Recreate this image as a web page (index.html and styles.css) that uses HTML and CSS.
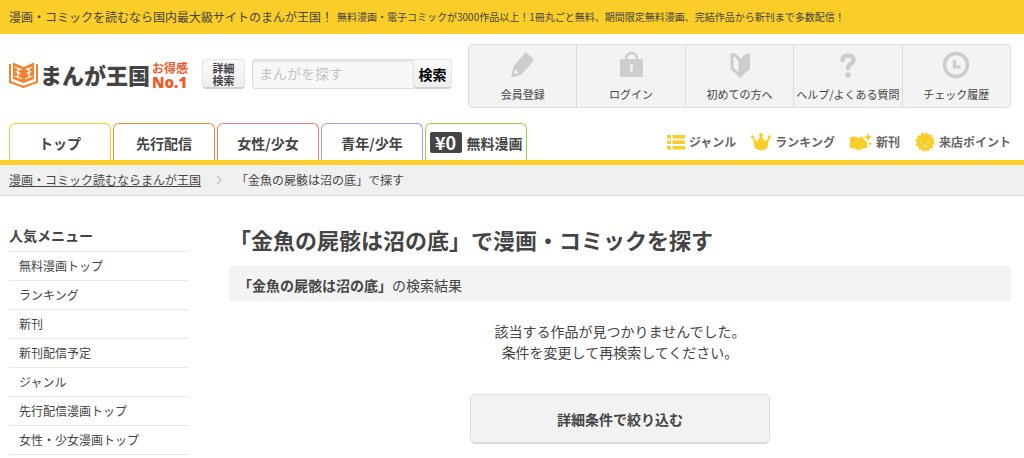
FILE: index.html
```html
<!DOCTYPE html>
<html lang="ja">
<head>
    <meta charset="UTF-8">
    <meta name="viewport" content="width=device-width, initial-scale=1.0">
    <title>「金魚の屍骸は沼の底」で漫画・コミックを探す</title>
    <link rel="stylesheet" href="styles.css">
</head>
<body>
    <div class="topbar">
        <p>漫画・コミックを読むなら国内最大級サイトのまんが王国！</p>
        <small>無料漫画・電子コミックが3000作品以上！1冊丸ごと無料、期間限定無料漫画、完結作品から新刊まで多数配信！</small>
    </div>

    <header class="header">
        <a href="#" class="logo">
            <svg width="29" height="28" viewBox="0 0 29 28" fill="none" stroke="#f5822a" stroke-width="2">
                <path d="M1 3v18l13.500 5L28 21V3"/>
                <path d="M4 1.500l10.500 4.500L25 1.500V18l-10.500 4L4 18z" fill="#f5822a" stroke="none"/>
                <path d="M5.500 6l7 2.500M6.500 10.500l5 2M5.500 15l7.500 3M9 7.500v9M23.500 6l-7 2.500M22.500 10.500l-5 2M23.500 15L16 18M20 7.500v9" stroke="#fff" stroke-width="1.300"/>
            </svg>
            <span class="logo-name">まんが王国</span>
            <span class="logo-copy">お得感<b>No.1</b></span>
        </a>
        <button type="button" class="detail-button">詳細<br>検索</button>
        <form class="search">
            <input type="text" placeholder="まんがを探す" aria-label="まんがを探す">
            <button type="submit">検索</button>
        </form>
        <nav class="user-nav">
            <a href="#">
                <svg width="28" height="28" viewBox="0 0 28 28" fill="#cfcccf">
                    <path d="M15.500 2.500q1.500-1.500 3 0l5.500 5q1.500 1.500 0 3L12 24 2 26.500l2.500-11z"/>
                    <path d="M6 18.500l-1 4.500 4.500-1z" fill="#f3f3f3"/>
                </svg>
                会員登録
            </a>
            <a href="#">
                <svg width="28" height="28" viewBox="0 0 28 28" fill="#cfcccf">
                    <path d="M9 10V7.500a5.500 5.500 0 0 1 11 0V10" fill="none" stroke="#cfcccf" stroke-width="2.500"/>
                    <rect x="3" y="8" width="23" height="18" rx="1.500"/>
                    <path d="M14.500 13a2 2 0 0 1 1 3.700V21h-2v-4.300a2 2 0 0 1 1-3.700z" fill="#f3f3f3"/>
                </svg>
                ログイン
            </a>
            <a href="#">
                <svg width="28" height="28" viewBox="0 0 28 28" fill="#cfcccf">
                    <path d="M6 4.500v13l8 7V9.500Q8 1.500 6 4.500z" fill="none" stroke="#cfcccf" stroke-width="3"/>
                    <path d="M14 9.500Q19 1.500 23 2.500q1 .5 1 2v13.500l-10 8.500z"/>
                </svg>
                初めての方へ
            </a>
            <a href="#">
                <svg width="28" height="28" viewBox="0 0 28 28" fill="#cfcccf">
                    <path d="M8.500 9Q9 4.500 14 4.500t5.500 4.200c0 4-5.500 4-5.500 8.300" fill="none" stroke="#cfcccf" stroke-width="4.500" stroke-linecap="round"/>
                    <circle cx="14" cy="24" r="2.800"/>
                </svg>
                ヘルプ/よくある質問
            </a>
            <a href="#">
                <svg width="28" height="28" viewBox="0 0 28 28" fill="none" stroke="#cfcccf">
                    <circle cx="14" cy="14" r="11.500" stroke-width="3.500"/>
                    <path d="M12.500 9v7h6" stroke-width="3"/>
                </svg>
                チェック履歴
            </a>
        </nav>
    </header>

    <div class="menu">
        <nav class="tabs">
            <a href="#" class="tab tab-top">トップ</a>
            <a href="#" class="tab tab-early">先行配信</a>
            <a href="#" class="tab tab-women">女性/少女</a>
            <a href="#" class="tab tab-men">青年/少年</a>
            <a href="#" class="tab tab-free"><span class="zero">¥0</span>無料漫画</a>
        </nav>
        <nav class="sub-nav">
            <a href="#">
                <svg width="18" height="16" viewBox="0 0 18 16" fill="#facd28">
                    <path d="M0 1h4v3.500H0zM5.500 1H18v3.500H5.500zM0 6.500h4V10H0zM5.500 6.500H18V10H5.500zM0 12h4v3.500H0zM5.500 12H18v3.500H5.500z"/>
                </svg>
                ジャンル
            </a>
            <a href="#">
                <svg width="20" height="18" viewBox="0 0 20 18" fill="#facd28">
                    <path d="M1.500 4l4.500 4.500L10 2l4 6.500L18.500 4 16 15.500q-6 3.500-12 0z"/>
                    <circle cx="1.700" cy="4" r="1.700"/><circle cx="10" cy="2" r="2"/><circle cx="18.300" cy="4" r="1.700"/>
                </svg>
                ランキング
            </a>
            <a href="#">
                <svg width="22" height="18" viewBox="0 0 22 18" fill="#facd28">
                    <path d="M0 4.500q4-2 8.500.5Q11 3.500 12.500 3.500q1 4 4.500 5v6.500q-4-.5-8.500 2.500Q5 14.500 0 15z"/>
                    <path d="M18 0l1.200 2.800L22 4l-2.800 1.200L18 8l-1.200-2.800L14 4l2.800-1.200zM20 8.500l.7 1.500 1.300.7-1.300.7-.7 1.600-.7-1.600-1.300-.7 1.300-.7z"/>
                </svg>
                新刊
            </a>
            <a href="#">
                <svg width="20" height="20" viewBox="0 0 20 20">
                    <circle cx="10" cy="10" r="8.300" fill="#facd28"/>
                    <circle cx="10" cy="10" r="8.300" fill="none" stroke="#facd28" stroke-width="2.500" stroke-dasharray="2.600 1.750"/>
                    <path d="M5.500 10q1.200 2 2.500 0M12 10q1.200 2 2.500 0M7.500 14.500q2 0 2.500-1.500.5 1.500 2.500 1.500" fill="none" stroke="#fff" stroke-width=".8"/>
                </svg>
                来店ポイント
            </a>
        </nav>
    </div>

    <div class="breadcrumb">
        <a href="#">漫画・コミック読むならまんが王国</a>
        <svg width="6" height="8" viewBox="0 0 6 8" fill="none" stroke="#c8c8c8" stroke-width="1.500"><path d="M1 0l4 4-4 4"/></svg>
        <span>「金魚の屍骸は沼の底」で探す</span>
    </div>

    <div class="container">
        <aside class="sidebar">
            <h2>人気メニュー</h2>
            <ul>
                <li><a href="#">無料漫画トップ</a></li>
                <li><a href="#">ランキング</a></li>
                <li><a href="#">新刊</a></li>
                <li><a href="#">新刊配信予定</a></li>
                <li><a href="#">ジャンル</a></li>
                <li><a href="#">先行配信漫画トップ</a></li>
                <li><a href="#">女性・少女漫画トップ</a></li>
            </ul>
        </aside>
        <main class="main">
            <h1>「金魚の屍骸は沼の底」で漫画・コミックを探す</h1>
            <p class="result"><strong>「金魚の屍骸は沼の底」</strong>の検索結果</p>
            <p class="message">該当する作品が見つかりませんでした。<br>条件を変更して再検索してください。</p>
            <button type="button" class="filter-button">詳細条件で絞り込む</button>
        </main>
    </div>
</body>
</html>
```
FILE: styles.css
```css
* {
    box-sizing: border-box;
}
body {
    margin: 0;
    font-family: "Noto Sans CJK JP", sans-serif;
    font-size: 12px;
    line-height: 18px;
    color: #444;
    background-color: #fff;
}
h1, h2, p, ul {
    margin: 0;
    padding: 0;
}
ul {
    list-style: none;
}
a {
    color: inherit;
    text-decoration: none;
}
svg {
    flex: none;
}
button, input {
    font-family: inherit;
    color: inherit;
}
button {
    padding: 0;
    cursor: pointer;
}
.topbar {
    display: flex;
    align-items: center;
    gap: 4px;
    height: 34px;
    padding: 0 9px;
    background-color: #facd28;
    white-space: nowrap;
}
.topbar small {
    font-size: 10px;
}
.header {
    display: flex;
    align-items: flex-start;
    padding: 10px 13px 0 9px;
}
.logo {
    display: flex;
    align-items: center;
    width: 193px;
    height: 32px;
    margin-top: 15px;
    white-space: nowrap;
}
.logo-name {
    margin: 0 2px;
    padding-bottom: 2px;
    font-size: 22px;
    font-weight: 900;
    line-height: 28px;
}
.logo-copy {
    font-size: 12px;
    font-weight: bold;
    line-height: 14px;
    color: #f1592a;
}
.logo-copy b {
    display: block;
    font-family: "Open Sans", sans-serif;
    font-size: 15px;
    font-weight: 800;
    line-height: 14px;
}
.detail-button {
    width: 43px;
    height: 30px;
    margin-top: 15px;
    border: 1px solid #e5e5e5;
    border-bottom: 2px solid #d2d2d2;
    border-radius: 4px;
    background: linear-gradient(#fafafa, #eee);
    font-size: 11px;
    font-weight: bold;
    line-height: 12px;
}
.search {
    display: flex;
    width: 200px;
    height: 30px;
    margin: 15px 0 0 7px;
}
.search input {
    flex: 1;
    min-width: 0;
    padding: 0 6px 2px;
    border: 1px solid #ddd;
    border-right: 0;
    border-radius: 4px 0 0 4px;
    background-color: #f8f8f8;
    box-shadow: inset 0 2px 2px #e4e4e4;
    font-size: 14px;
}
.search input::placeholder {
    color: #c4c4c4;
}
.search button {
    width: 39px;
    border: 1px solid #e5e5e5;
    border-bottom: 2px solid #d2d2d2;
    border-radius: 0 4px 4px 4px;
    background: linear-gradient(#fafafa, #eee);
    font-size: 14px;
    font-weight: bold;
    color: #000;
}
.user-nav {
    display: flex;
    flex: 1;
    margin-left: 16px;
    border: 1px solid #ddd;
    border-radius: 4px;
    background-color: #f3f3f3;
}
.user-nav a {
    display: flex;
    flex: 1 1 0;
    min-width: 0;
    flex-direction: column;
    align-items: center;
    gap: 6px;
    height: 62px;
    padding-top: 6px;
    font-size: 11px;
    line-height: 18px;
    white-space: nowrap;
}
.user-nav a + a {
    border-left: 1px solid #ddd;
}
.menu {
    display: flex;
    justify-content: space-between;
    margin-top: 15px;
    padding: 0 13px 0 9px;
    border-bottom: 5px solid #facd28;
}
.tabs {
    display: flex;
    gap: 2px;
}
.tab {
    display: flex;
    align-items: center;
    justify-content: center;
    width: 102px;
    height: 37px;
    padding-top: 1px;
    border: 1px solid;
    border-bottom: 0;
    border-radius: 6px 6px 0 0;
    font-size: 14px;
    font-weight: bold;
    white-space: nowrap;
}
.tab-top {
    border-color: #facd28;
}
.tab-early {
    border-color: #f78f1e;
}
.tab-women {
    border-color: #f08080;
}
.tab-men {
    border-color: #93a5e5;
}
.tab-free {
    border-color: #99d23c;
}
.zero {
    width: 32px;
    margin-right: 5px;
    border-radius: 2px;
    background-color: #444;
    color: #fff;
    font-size: 18px;
    line-height: 21px;
    text-align: center;
}
.sub-nav {
    display: flex;
    align-items: center;
    gap: 15px;
    font-weight: bold;
    color: #666;
}
.sub-nav a {
    display: flex;
    align-items: center;
    gap: 4px;
    white-space: nowrap;
}
.breadcrumb {
    display: flex;
    align-items: center;
    height: 31px;
    padding: 0 9px;
    border-bottom: 1px solid #ddd;
    background-color: #f0f0f0;
}
.breadcrumb a {
    text-decoration: underline;
}
.breadcrumb svg {
    margin: 0 14px 0 15px;
}
.container {
    display: flex;
    gap: 40px;
    padding: 28px 13px 0 9px;
}
.sidebar {
    flex: none;
    width: 180px;
}
.sidebar h2 {
    height: 28px;
    border-bottom: 1px solid #e8e8e8;
    font-size: 14px;
    line-height: 22px;
}
.sidebar li {
    border-bottom: 1px solid #e8e8e8;
}
.sidebar li a {
    display: block;
    padding: 0 10px;
    line-height: 28px;
}
.main {
    flex: 1;
}
.main h1 {
    font-size: 22px;
    line-height: 30px;
}
.result {
    margin-top: 12px;
    padding: 9px 9px 5px;
    background-color: #f3f3f3;
    font-size: 14px;
    line-height: 21px;
}
.message {
    margin-top: 20px;
    font-size: 14px;
    line-height: 21px;
    text-align: center;
}
.filter-button {
    display: block;
    width: 300px;
    height: 50px;
    margin: 31px auto 0;
    border: 1px solid #ddd;
    border-bottom-width: 2px;
    border-radius: 5px;
    background-color: #f2f2f2;
    font-size: 14px;
    font-weight: bold;
}
```
